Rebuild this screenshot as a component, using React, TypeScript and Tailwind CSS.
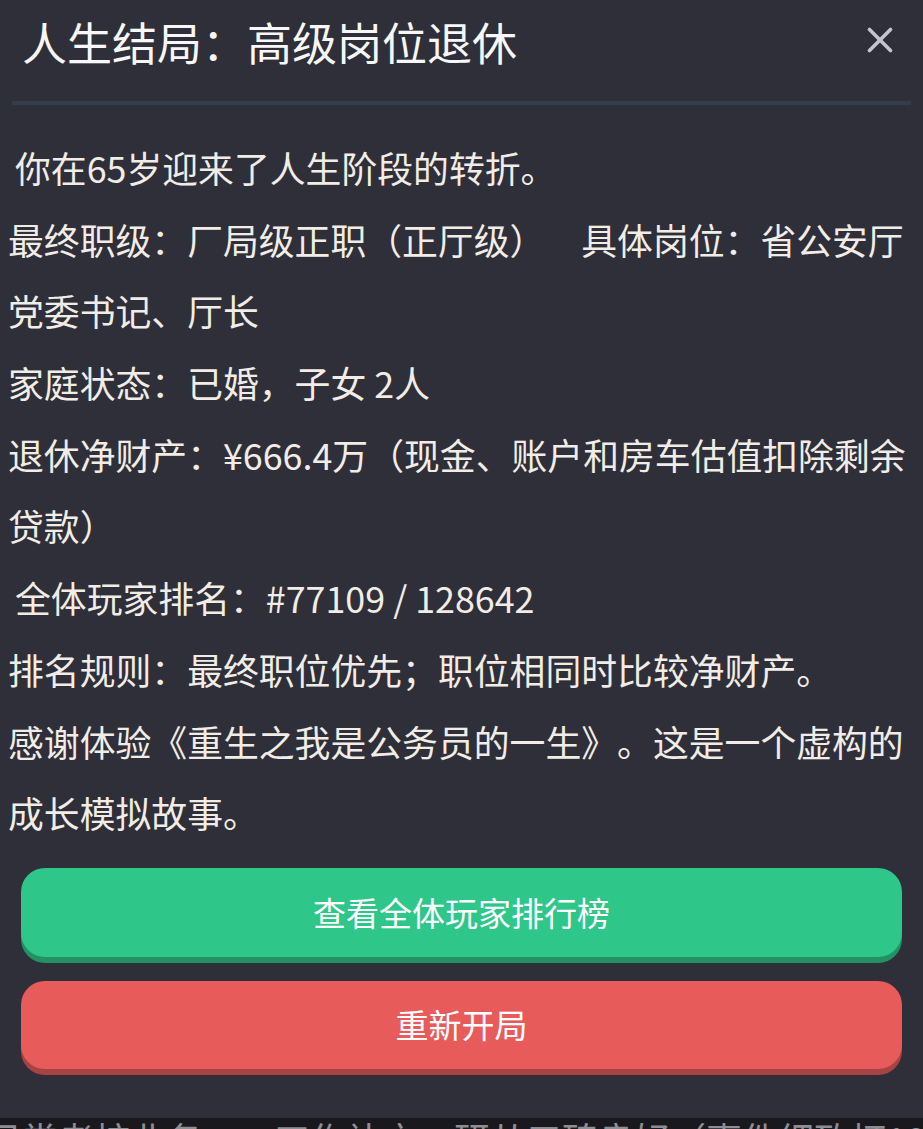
import React from "react";

const font = { fontFamily: '"Noto Sans CJK SC", "Noto Sans", sans-serif' };

export default function App() {
  return (
    <div
      className="w-[923px] h-[1129px] overflow-hidden flex flex-col bg-[#18181d] [text-spacing-trim:space-all]"
      style={font}
    >
      <div className="h-[1118px] shrink-0 bg-[#2f2f3a] flex flex-col">
        <div className="h-[82px] flex items-center justify-between pl-[22px] pr-[30px]">
          <h2 className="text-[45px] leading-none text-[#f7f7f7] font-normal">
            人生结局：高级岗位退休
          </h2>
          <svg width="26" height="26" viewBox="0 0 26 26" fill="none" className="mt-[-2px]">
            <path
              d="M2.5 2.5 L23.5 23.5 M23.5 2.5 L2.5 23.5"
              stroke="#c3c6d0"
              strokeWidth="3.6"
              strokeLinecap="round"
            />
          </svg>
        </div>
        <div className="ml-[12px] w-[899px] h-[4px] bg-[#363d4a] mt-[19px]" />
        <div className="mt-[27px] px-[8px] text-[35.84px] leading-[71.68px] text-[#f1ede6]">
          <p className="pl-[7px]">你在65岁迎来了人生阶段的转折。</p>
          <p>最终职级：厂局级正职（正厅级）　具体岗位：省公安厅党委书记、厅长</p>
          <p>家庭状态：已婚，子女 2人</p>
          <p>退休净财产：¥666.4万（现金、账户和房车估值扣除剩余贷款）</p>
          <p className="pl-[7px]">全体玩家排名：#77109 / 128642</p>
          <p>排名规则：最终职位优先；职位相同时比较净财产。</p>
          <p>感谢体验《重生之我是公务员的一生》。这是一个虚构的成长模拟故事。</p>
        </div>
        <div className="mt-[19px] px-[21px] flex flex-col gap-[24px]">
          <button className="h-[89px] w-full rounded-[24px] bg-[#2fc68a] shadow-[0_6px_0_#229262] text-white text-[33px] leading-none flex items-center justify-center">
            查看全体玩家排行榜
          </button>
          <button className="h-[88px] w-full rounded-[24px] bg-[#e75c5b] shadow-[0_6px_0_#a94343] text-white text-[33px] leading-none flex items-center justify-center">
            重新开局
          </button>
        </div>
      </div>
      <div className="h-[11px] overflow-hidden relative">
        <div className="absolute top-[2px] left-[-14px] whitespace-nowrap text-[36px] leading-none text-[#8d8d93]">
          日常考核业务　　工作补充：研从口碑良好（事件细致打10，总分100
        </div>
      </div>
    </div>
  );
}
